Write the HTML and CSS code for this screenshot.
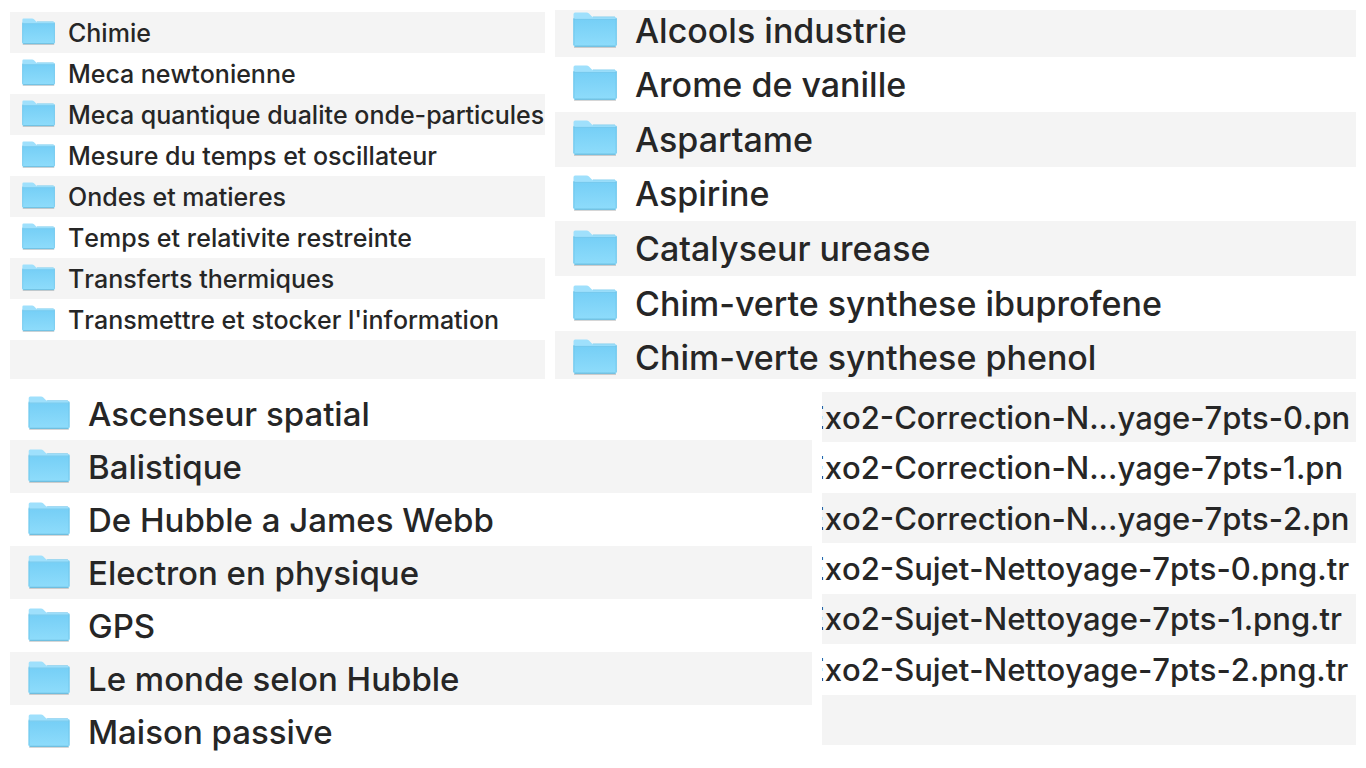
FILE: index.html
```
<!DOCTYPE html>
<html lang="fr">
<head>
<meta charset="utf-8">
<title>Dossiers</title>
<link rel="stylesheet" href="styles.css">
</head>
<body>
<svg class="defs" aria-hidden="true">
  <defs>
    <linearGradient id="front" x1="0" y1="0" x2="0" y2="1">
      <stop offset="0" stop-color="#76cff6"/>
      <stop offset="1" stop-color="#8edcfb"/>
    </linearGradient>
    <symbol id="folder" viewBox="0 0 44 36">
      <path d="M1 35.2H43" stroke="#000" stroke-opacity=".16" stroke-width="1.6"/>
      <path d="M.5 2.2Q.5.6 2.1.6H13.5Q15 .6 16 1.6L18.6 4.2Q19.4 5 20.6 5H42Q43.6 5 43.6 6.6V33Q43.6 34.4 42 34.4H2Q.5 34.4.5 33Z" fill="#9fe0fc"/>
      <path d="M.5 7.6H43.6V33Q43.6 34.4 42 34.4H2Q.5 34.4.5 33Z" fill="url(#front)"/>
      <path d="M.5 7.4H43.6" stroke="#6fc4ea" stroke-width=".8"/>
      <path d="M20 4.9H42" stroke="#7fcdee" stroke-width=".8"/>
      <path d="M.9 6V33M43.2 6V33" stroke="#6cc3e8" stroke-width=".8"/>
      <path d="M1.5 34.2H42.6" stroke="#5fb4d8" stroke-width="1"/>
    </symbol>
  </defs>
</svg>
<main class="page">
  <div class="band band-top">
    <ul class="list themes">
      <li class="row"><svg class="icon"><use href="#folder"/></svg><span class="name">Chimie</span></li>
      <li class="row"><svg class="icon"><use href="#folder"/></svg><span class="name">Meca newtonienne</span></li>
      <li class="row"><svg class="icon"><use href="#folder"/></svg><span class="name">Meca quantique dualite onde-particules</span></li>
      <li class="row"><svg class="icon"><use href="#folder"/></svg><span class="name">Mesure du temps et oscillateur</span></li>
      <li class="row"><svg class="icon"><use href="#folder"/></svg><span class="name">Ondes et matieres</span></li>
      <li class="row"><svg class="icon"><use href="#folder"/></svg><span class="name">Temps et relativite restreinte</span></li>
      <li class="row"><svg class="icon"><use href="#folder"/></svg><span class="name">Transferts thermiques</span></li>
      <li class="row"><svg class="icon"><use href="#folder"/></svg><span class="name">Transmettre et stocker l'information</span></li>
      <li class="row"></li>
    </ul>
    <ul class="list chemistry">
      <li class="row"><svg class="icon"><use href="#folder"/></svg><span class="name">Alcools industrie</span></li>
      <li class="row"><svg class="icon"><use href="#folder"/></svg><span class="name">Arome de vanille</span></li>
      <li class="row"><svg class="icon"><use href="#folder"/></svg><span class="name">Aspartame</span></li>
      <li class="row"><svg class="icon"><use href="#folder"/></svg><span class="name">Aspirine</span></li>
      <li class="row"><svg class="icon"><use href="#folder"/></svg><span class="name">Catalyseur urease</span></li>
      <li class="row"><svg class="icon"><use href="#folder"/></svg><span class="name">Chim-verte synthese ibuprofene</span></li>
      <li class="row"><svg class="icon"><use href="#folder"/></svg><span class="name">Chim-verte synthese phenol</span></li>
    </ul>
  </div>
  <div class="band band-bottom">
    <ul class="list mechanics">
      <li class="row"><svg class="icon"><use href="#folder"/></svg><span class="name">Ascenseur spatial</span></li>
      <li class="row"><svg class="icon"><use href="#folder"/></svg><span class="name">Balistique</span></li>
      <li class="row"><svg class="icon"><use href="#folder"/></svg><span class="name">De Hubble a James Webb</span></li>
      <li class="row"><svg class="icon"><use href="#folder"/></svg><span class="name">Electron en physique</span></li>
      <li class="row"><svg class="icon"><use href="#folder"/></svg><span class="name">GPS</span></li>
      <li class="row"><svg class="icon"><use href="#folder"/></svg><span class="name">Le monde selon Hubble</span></li>
      <li class="row"><svg class="icon"><use href="#folder"/></svg><span class="name">Maison passive</span></li>
    </ul>
    <ul class="list files">
      <li class="row"><span class="name">Exo2-Correction-N...yage-7pts-0.pn</span></li>
      <li class="row"><span class="name">Exo2-Correction-N...yage-7pts-1.pn</span></li>
      <li class="row"><span class="name">Exo2-Correction-N...yage-7pts-2.pn</span></li>
      <li class="row"><span class="name">Exo2-Sujet-Nettoyage-7pts-0.png.tr</span></li>
      <li class="row"><span class="name">Exo2-Sujet-Nettoyage-7pts-1.png.tr</span></li>
      <li class="row"><span class="name">Exo2-Sujet-Nettoyage-7pts-2.png.tr</span></li>
      <li class="row"></li>
    </ul>
  </div>
</main>
</body>
</html>
```
FILE: styles.css
```
body {
  margin: 0;
  background: #fff;
  color: #262626;
  font-family: Inter, "Liberation Sans", sans-serif;
  font-weight: 500;
}

.defs {
  position: absolute;
  width: 0;
  height: 0;
}

.page {
  padding: 10px;
}

.band {
  display: grid;
  column-gap: 10px;
  align-items: start;
}

.band-top {
  grid-template-columns: 535fr 801fr;
}

.band-bottom {
  grid-template-columns: 802fr 534fr;
  margin-top: 8px;
}

.list {
  display: grid;
  min-width: 0;
  margin: 0;
  padding: 0;
  overflow: hidden;
  list-style: none;
}

.row {
  display: flex;
  box-sizing: border-box;
  align-items: center;
  min-height: 0;
  white-space: nowrap;
}

.icon {
  flex: none;
  margin-bottom: 2px;
}

.themes .row:nth-child(odd),
.chemistry .row:nth-child(odd),
.mechanics .row:nth-child(even),
.files .row:nth-child(odd) {
  background: #f4f4f4;
}

.themes {
  grid-template-rows: repeat(8, 41px) 39px;
  margin-top: 2px;
  font-size: 25px;
  font-kerning: none;
}

.themes .row {
  gap: 13px;
  padding-left: 12px;
}

.themes .icon {
  width: 33px;
  height: 27px;
}

.chemistry {
  grid-template-rows: 47px repeat(5, 1fr) 48px;
  height: 369px;
  font-size: 34px;
}

.chemistry .row {
  gap: 18px;
  padding-left: 18px;
}

.chemistry .row:first-child {
  padding-bottom: 6px;
}

.chemistry .row:last-child {
  padding-top: 6px;
}

.chemistry .icon {
  width: 44px;
  height: 36px;
}

.mechanics {
  grid-auto-rows: 53px;
  font-size: 33px;
}

.mechanics .row {
  gap: 18px;
  padding-left: 18px;
}

.mechanics .icon {
  width: 42px;
  height: 34px;
}

.files {
  grid-auto-rows: 1fr;
  height: 353px;
  margin-top: 5px;
  font-size: 31px;
  font-kerning: none;
}

.files .name {
  margin-left: -16px;
}
```
